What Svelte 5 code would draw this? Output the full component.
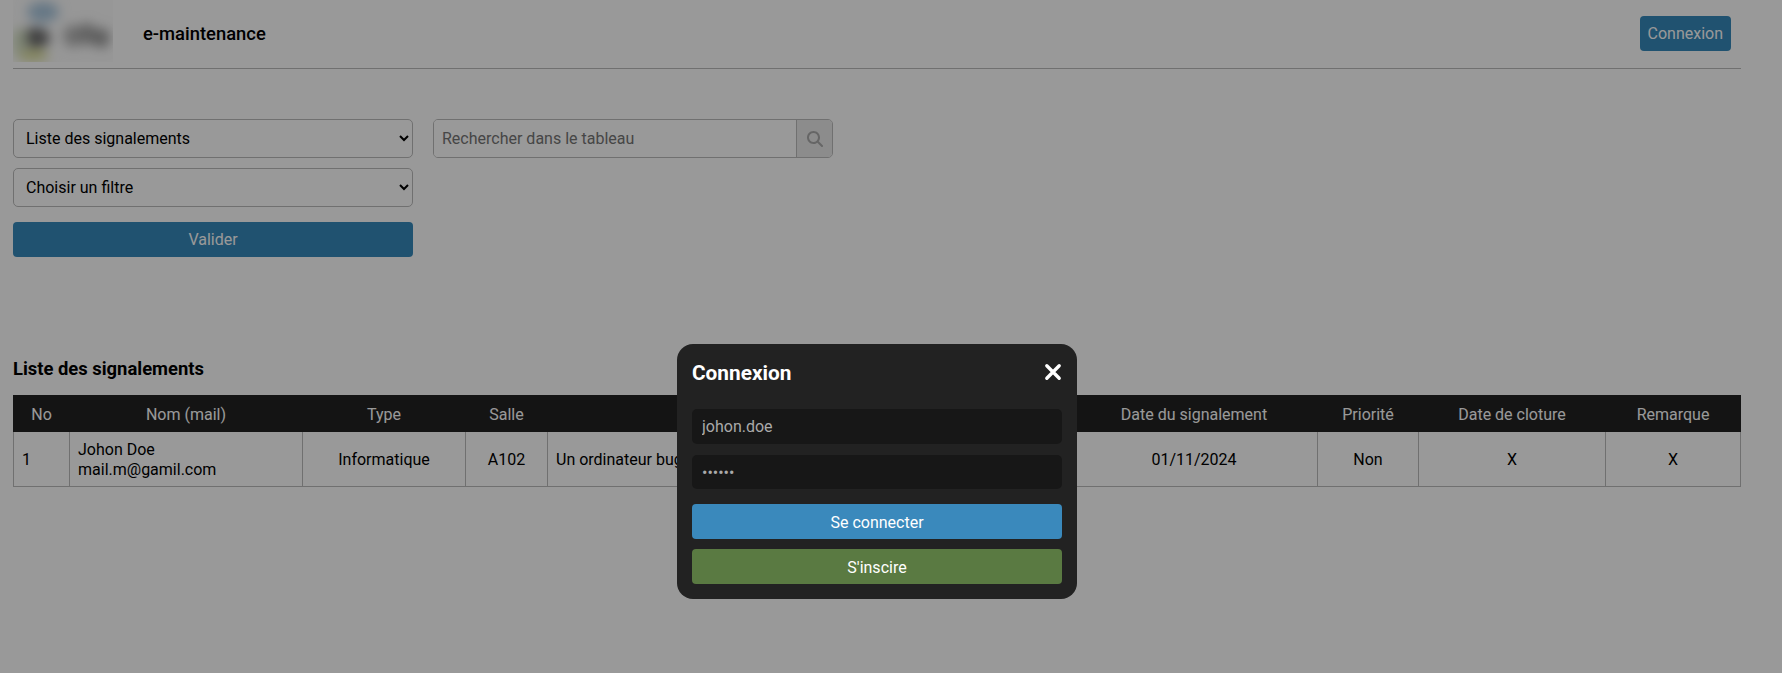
<script>
  const columns = [
    'No',
    'Nom (mail)',
    'Type',
    'Salle',
    'Description',
    'Date du signalement',
    'Priorité',
    'Date de cloture',
    'Remarque'
  ];

  const widths = [56, 233, 163, 82, 523, 247, 101, 187, 135];

  const login = 'johon.doe';
  const password = 'secret';
</script>

<div class="page">
  <header class="topbar">
    <div class="brand">
      <svg class="logo" viewBox="0 0 100 62" aria-hidden="true">
        <defs>
          <filter id="smear" x="-30%" y="-30%" width="160%" height="160%">
            <feGaussianBlur stdDeviation="6" />
          </filter>
        </defs>
        <rect width="100" height="62" fill="#fcfcfc" />
        <g filter="url(#smear)">
          <ellipse cx="30" cy="12" rx="16" ry="10" fill="#a8c6de" />
          <ellipse cx="23" cy="38" rx="14" ry="11" fill="#707070" />
          <ellipse cx="6" cy="42" rx="7" ry="14" fill="#d4e0c2" />
          <ellipse cx="60" cy="36" rx="10" ry="11" fill="#b4b4b4" />
          <ellipse cx="74" cy="34" rx="9" ry="11" fill="#a4a4a4" />
          <ellipse cx="88" cy="38" rx="9" ry="10" fill="#9c9c9c" />
          <ellipse cx="20" cy="56" rx="16" ry="5" fill="#d8dc8c" />
        </g>
      </svg>
      <span class="name">e-maintenance</span>
    </div>
    <button class="btn primary small" type="button">Connexion</button>
  </header>

  <section class="filters">
    <form class="filter-form" on:submit|preventDefault>
      <select>
        <option>Liste des signalements</option>
      </select>
      <select>
        <option>Choisir un filtre</option>
      </select>
      <button class="btn primary validate" type="submit">Valider</button>
    </form>

    <div class="search">
      <input type="text" placeholder="Rechercher dans le tableau" />
      <button type="button" aria-label="Rechercher">
        <svg viewBox="0 0 512 512" width="16" height="16">
          <path
            fill="currentColor"
            d="M416 208c0 45.900-14.900 88.300-40 122.700L502.600 457.400c12.500 12.500 12.500 32.800 0 45.300s-32.800 12.500-45.300 0L330.700 376c-34.400 25.200-76.800 40-122.700 40C93.100 416 0 322.900 0 208S93.100 0 208 0S416 93.100 416 208zM208 352a144 144 0 1 0 0-288 144 144 0 1 0 0 288z"
          />
        </svg>
      </button>
    </div>
  </section>

  <h2>Liste des signalements</h2>

  <table>
    <colgroup>
      {#each widths as w}
        <col style="width: {w}px" />
      {/each}
    </colgroup>
    <thead>
      <tr>
        {#each columns as c}
          <th>{c}</th>
        {/each}
      </tr>
    </thead>
    <tbody>
      <tr>
        <td class="left">1</td>
        <td class="left">Johon Doe<br />mail.m@gamil.com</td>
        <td>Informatique</td>
        <td>A102</td>
        <td class="left">Un ordinateur bugue</td>
        <td>01/11/2024</td>
        <td>Non</td>
        <td>X</td>
        <td>X</td>
      </tr>
    </tbody>
  </table>
</div>

<div class="overlay">
  <div class="modal">
    <div class="modal-head">
      <h3>Connexion</h3>
      <button class="close" type="button" aria-label="Fermer">
        <svg viewBox="0 0 16 16" width="18" height="18">
          <path d="M2.500 2.500 L13.500 13.500 M13.500 2.500 L2.500 13.500" stroke="#fff" stroke-width="3" stroke-linecap="round" />
        </svg>
      </button>
    </div>
    <input class="dark" type="text" value={login} />
    <input class="dark" type="password" value={password} />
    <button class="btn login" type="button">Se connecter</button>
    <button class="btn signup" type="button">S'inscire</button>
  </div>
</div>

<style>
  :global(body) {
    background: #fff;
    font-family: Roboto, "Liberation Sans", sans-serif;
    color: #000;
  }

  .page {
    width: 1728px;
    margin-left: 13px;
  }

  .topbar {
    height: 68px;
    border-bottom: 1px solid #bbb;
    display: flex;
    align-items: center;
    justify-content: space-between;
    padding-right: 10px;
  }

  .brand {
    display: flex;
    align-items: center;
    gap: 30px;
  }

  .logo {
    width: 100px;
    height: 62px;
    margin-top: -6px;
  }

  .name {
    font-size: 18.4px;
    font-weight: 500;
    margin-top: -1px;
  }

  .btn {
    border: none;
    border-radius: 4px;
    font-family: inherit;
    font-size: 16px;
    color: #fff;
    cursor: pointer;
    height: 35px;
  }

  .primary {
    background: #3689bb;
  }

  .small {
    padding: 0 8px;
    margin-top: -2px;
  }

  .filters {
    display: flex;
    gap: 20px;
    align-items: flex-start;
    margin-top: 50px;
  }

  .filter-form {
    width: 400px;
    display: flex;
    flex-direction: column;
    gap: 10px;
  }

  select {
    height: 39px;
    padding: 8px;
    border: 1px solid #bbb;
    border-radius: 5px;
    background: #fff;
    font-family: inherit;
    font-size: 16px;
    color: #000;
  }

  .validate {
    margin-top: 5px;
  }

  .search {
    width: 400px;
    height: 39px;
    box-sizing: border-box;
    display: flex;
    border: 1px solid #bbb;
    border-radius: 5px;
    overflow: hidden;
  }

  .search input {
    flex: 1;
    min-width: 0;
    border: none;
    outline: none;
    padding: 0 8px;
    font-family: inherit;
    font-size: 16px;
  }

  .search input::placeholder {
    color: #757575;
  }

  .search button {
    width: 36px;
    border: none;
    border-left: 1px solid #bbb;
    background: #e9e9e9;
    color: #aaa;
    display: flex;
    align-items: center;
    justify-content: center;
    padding: 0;
  }

  h2 {
    margin: 95px 0 0;
    height: 43px;
    font-size: 18.4px;
    font-weight: 700;
    line-height: 34px;
  }

  table {
    width: 1727px;
    table-layout: fixed;
    border-collapse: collapse;
    font-size: 16px;
  }

  th {
    height: 36px;
    padding: 1px 0 0;
    box-sizing: border-box;
    background: #222;
    color: #fff;
    font-weight: 400;
    border: 1px solid #222;
  }

  td {
    height: 55px;
    padding: 1px 8px 0;
    box-sizing: border-box;
    border: 1px solid #bbb;
    text-align: center;
    line-height: 20px;
  }

  td.left {
    text-align: left;
  }

  .overlay {
    position: fixed;
    inset: 0;
    background: rgba(0, 0, 0, 0.4);
  }

  .modal {
    position: absolute;
    left: 677px;
    top: 344px;
    width: 400px;
    height: 255px;
    box-sizing: border-box;
    padding: 15px;
    background: #222;
    border-radius: 16px;
    display: flex;
    flex-direction: column;
  }

  .modal-head {
    height: 50px;
    display: flex;
    justify-content: space-between;
    align-items: flex-start;
  }

  h3 {
    margin: 0;
    font-size: 20.8px;
    font-weight: 700;
    line-height: 28px;
    color: #fff;
  }

  .close {
    width: 18px;
    height: 18px;
    margin-top: 4px;
    padding: 0;
    border: none;
    background: none;
  }

  .dark {
    height: 35px;
    box-sizing: border-box;
    border: none;
    outline: none;
    border-radius: 5px;
    background: #171717;
    color: #aaa;
    padding: 1px 10px 0;
    font-family: inherit;
    font-size: 16px;
    margin-bottom: 11px;
  }

  .dark + .dark {
    margin-bottom: 15px;
  }

  .login {
    background: #3a89bc;
    margin-bottom: 10px;
    padding-top: 2px;
  }

  .signup {
    background: #5a7a42;
    padding-top: 2px;
  }
</style>
